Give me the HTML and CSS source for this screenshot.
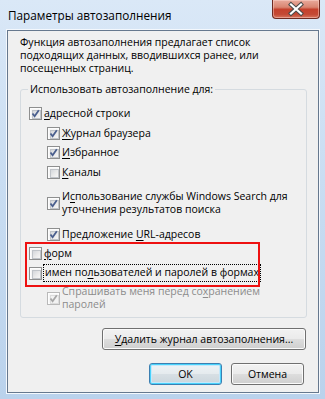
FILE: index.html
```html
<!DOCTYPE html>
<html lang="ru">
<head>
  <meta charset="UTF-8">
  <title>Параметры автозаполнения</title>
  <link rel="stylesheet" href="styles.css">
</head>
<body>
  <div class="window">

    <!-- Title bar -->
    <div class="titlebar">
      <span class="title">Параметры автозаполнения</span>
      <button class="close" aria-label="Закрыть">
        <svg width="46" height="18" viewBox="0 0 46 18">
          <path d="M18 4.5 L28 13.5 M28 4.5 L18 13.5" stroke="#4a4a4a" stroke-width="4.2" stroke-linecap="square"/>
          <path d="M18 4.5 L28 13.5 M28 4.5 L18 13.5" stroke="#ffffff" stroke-width="2.2" stroke-linecap="square"/>
        </svg>
      </button>
    </div>

    <!-- Client area -->
    <div class="client">
      <p class="intro">Функция автозаполнения предлагает список<br>подходящих данных, вводившихся ранее, или<br>посещенных страниц.</p>

      <fieldset class="group">
        <legend>Использовать автозаполнение для:</legend>

        <div class="row first">
          <span class="cb on"><svg viewBox="0 0 13 13"><path d="M3.5 6.5 L5.6 9.2 L9.8 3.2" /></svg></span>
          <span><u>а</u>дресной строки</span>
        </div>

        <div class="row sub">
          <span class="cb on"><svg viewBox="0 0 13 13"><path d="M3.5 6.5 L5.6 9.2 L9.8 3.2" /></svg></span>
          <span><u>Ж</u>урнал браузера</span>
        </div>
        <div class="row sub short">
          <span class="cb on"><svg viewBox="0 0 13 13"><path d="M3.5 6.5 L5.6 9.2 L9.8 3.2" /></svg></span>
          <span><u>И</u>збранное</span>
        </div>
        <div class="row sub">
          <span class="cb"></span>
          <span><u>К</u>аналы</span>
        </div>
        <div class="row sub tall search">
          <span class="cb on"><svg viewBox="0 0 13 13"><path d="M3.5 6.5 L5.6 9.2 L9.8 3.2" /></svg></span>
          <span>И<u>с</u>пользование службы Windows Search для<br>уточнения результатов поиска</span>
        </div>
        <div class="row sub url">
          <span class="cb on"><svg viewBox="0 0 13 13"><path d="M3.5 6.5 L5.6 9.2 L9.8 3.2" /></svg></span>
          <span>Предложение <u>U</u>RL-адресов</span>
        </div>

        <div class="marked">
          <div class="row short">
            <span class="cb"></span>
            <span><u>ф</u>орм</span>
          </div>
          <div class="row">
            <span class="cb"></span>
            <span class="focus">имен по<u>л</u>ьзователей и паролей в формах</span>
          </div>
        </div>

        <div class="row sub tall disabled">
          <span class="cb on"><svg viewBox="0 0 13 13"><path d="M3.5 6.5 L5.6 9.2 L9.8 3.2" /></svg></span>
          <span>Спрашивать меня перед со<u>х</u>ранением<br>паролей</span>
        </div>
      </fieldset>

      <div class="actions wide-row">
        <button class="btn wide"><u>У</u>далить журнал автозаполнения...</button>
      </div>
      <div class="actions footer">
        <button class="btn default">OK</button>
        <button class="btn">Отмена</button>
      </div>
    </div>

  </div>
</body>
</html>
```

FILE: styles.css
```css
* {
  margin: 0;
  padding: 0;
  box-sizing: border-box;
}

body {
  background-color: #ffffff;
  font-family: "Segoe UI", "Open Sans", "Noto Sans", sans-serif;
  font-size: 10.5px;
  line-height: 13px;
  color: #000;
}

u {
  text-decoration: underline;
  text-underline-offset: 2px;
}

/* Aero frame */
.window {
  width: 325px;
  height: 399px;
  background: linear-gradient(180deg, #dae8f7 0%, #c9ddf2 45%, #bad2ec 100%);
  padding-bottom: 7px;
}

.titlebar {
  height: 30px;
  display: flex;
  align-items: flex-start;
  padding-left: 8px;
}

.title {
  font-size: 11.75px;
  line-height: 15px;
  margin-top: 8px;
  color: #000;
}

.close {
  margin-left: auto;
  margin-right: 5px;
  width: 48px;
  height: 19px;
  border: 1px solid #6e2b22;
  border-top: none;
  border-radius: 0 0 4px 4px;
  background: linear-gradient(180deg, #e9aa9c 0%, #d98571 40%, #c5412d 52%, #c44a35 80%, #d8765f 100%);
  box-shadow: inset 0 0 0 1px rgba(255, 220, 210, 0.45);
  display: flex;
  align-items: center;
  justify-content: center;
}

.close svg {
  display: block;
}

/* Client area */
.client {
  height: 363px;
  margin: 0 6px 0 7px;
  background-color: #f0f0f0;
  border: 1px solid #66788e;
  box-shadow: 0 0 0 1px #f4f8fd;
}

.intro {
  margin-top: 5px;
  padding-left: 12px;
  white-space: nowrap;
}

/* Group box */
.group {
  margin: 8px 11px 0 12px;
  border: 1px solid #d5dbe0;
  border-radius: 3px;
  padding: 0 0 6px 8px;
}

.group legend {
  margin-left: -1px;
  padding: 0 2px;
  line-height: 13px;
}

.row {
  display: flex;
  align-items: center;
  gap: 2px;
  height: 20px;
  white-space: nowrap;
}

.row.first {
  margin-top: 7px;
}

.row.short {
  height: 19px;
}

.row.sub {
  padding-left: 18px;
}

.row.tall {
  height: 26px;
}

.row.search {
  margin-top: 8px;
}

.row.url {
  margin-top: 9px;
  height: 19px;
}

.row.disabled {
  margin-top: 2px;
  color: #8c8c8c;
}

/* Checkbox, Windows 7 look */
.cb {
  flex: none;
  position: relative;
  width: 13px;
  height: 13px;
  border: 1px solid #8e8f8f;
  background: #f6f6f6;
  box-shadow: inset 0 0 0 1px #fdfdfd;
}

.cb::before {
  content: '';
  position: absolute;
  top: 2px;
  left: 2px;
  width: 7px;
  height: 7px;
  border: 1px solid #c0c4c9;
  background: linear-gradient(135deg, #d4d7db 0%, #ececec 60%, #f7f7f7 100%);
}

.cb svg {
  position: absolute;
  top: -1px;
  left: -1px;
  width: 13px;
  height: 13px;
}

.cb svg path {
  fill: none;
  stroke: #4a5f8e;
  stroke-width: 1.8;
}

.disabled .cb {
  border-color: #b9b9b9;
}

.disabled .cb::before {
  border-color: #dcdcdc;
  background: #f2f2f2;
}

.disabled .cb svg path {
  stroke: #a7a7a7;
}

/* Highlighted rows (red annotation frame) */
.marked {
  position: relative;
}

.marked::after {
  content: '';
  position: absolute;
  box-sizing: border-box;
  top: -2px;
  left: -4px;
  width: 235px;
  height: 45px;
  border: 2px solid #ee1111;
  pointer-events: none;
}

.focus {
  outline: 1px dotted #000;
  outline-offset: 0;
  padding: 1px 1px 2px;
  line-height: 13px;
}

/* Buttons */
.actions {
  display: flex;
  justify-content: flex-end;
  gap: 9px;
}

.wide-row {
  margin-top: 10px;
  padding-right: 12px;
}

.footer {
  margin-top: 13px;
  padding-right: 14px;
}

.btn {
  font: inherit;
  color: #000;
  height: 22px;
  width: 73px;
  border: 1px solid #707070;
  border-radius: 3px;
  background: linear-gradient(180deg, #f2f2f2 0%, #ebebeb 48%, #dddddd 52%, #cfcfcf 100%);
  box-shadow: inset 0 0 0 1px #fbfbfb;
}

.btn.wide {
  width: 204px;
}

.btn.default {
  border-color: #3c7fb1;
  box-shadow: inset 0 0 0 1px #48d2fb, inset 0 0 0 2px #c4e8fb;
  background: linear-gradient(180deg, #eef3f6 0%, #e5ebee 48%, #d7dfe4 52%, #cbd6dc 100%);
}
```
